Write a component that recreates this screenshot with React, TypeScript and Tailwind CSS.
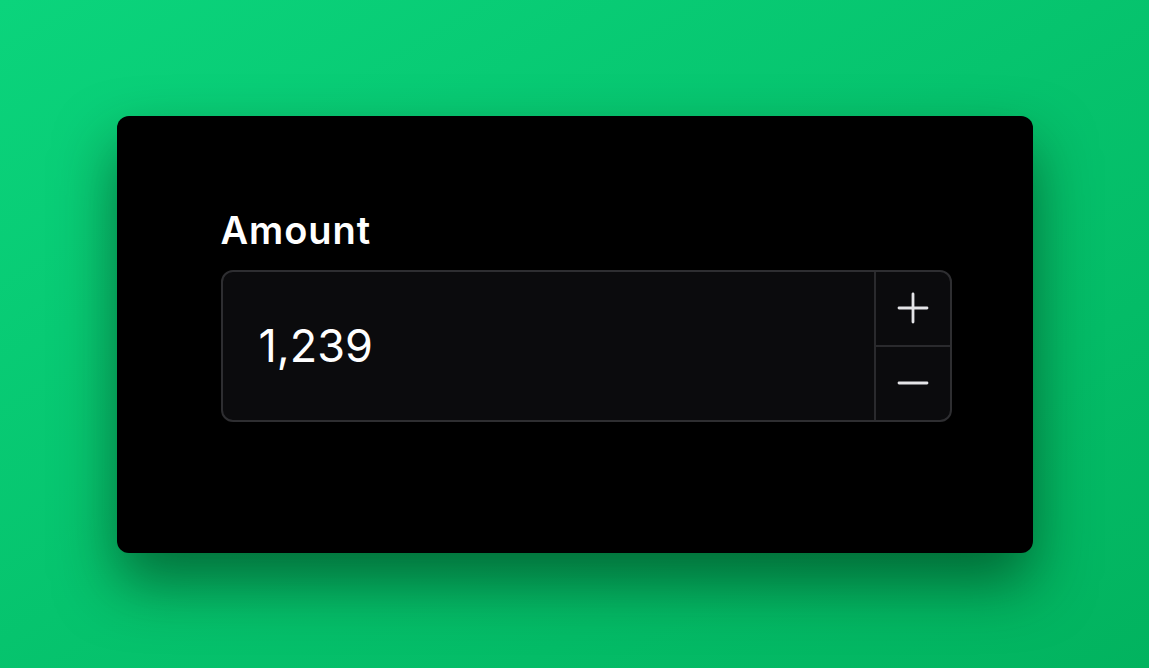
import { Plus, Minus } from "lucide-react";

export default function App() {
  return (
    <div className="flex h-[668px] w-full items-center justify-center bg-gradient-to-br from-[#0bd47c] to-[#02b35f] font-['Inter',sans-serif]">
      <div className="h-[437px] w-[916px] rounded-[12px] bg-black px-[104px] pt-[95px] shadow-[0_30px_60px_rgba(0,40,15,0.55)]">
        <label className="block text-[38px] font-semibold leading-[38px] tracking-[0.025em] text-white">
          Amount
        </label>
        <div className="mt-[21px] flex h-[152px] w-[731px] overflow-hidden rounded-[12px] border-2 border-[#2e2e31] bg-[#0b0b0d]">
          <div className="flex flex-1 items-center pl-[36px] text-[45px] text-white">
            1,239
          </div>
          <div className="flex w-[76px] flex-col border-l-2 border-[#2a2a2d]">
            <button className="flex flex-1 items-center justify-center text-[#e4e4e7]">
              <Plus size={48} strokeWidth={1.4} />
            </button>
            <button className="flex flex-1 items-center justify-center border-t-2 border-[#2a2a2d] text-[#e4e4e7]">
              <Minus size={48} strokeWidth={1.4} />
            </button>
          </div>
        </div>
      </div>
    </div>
  );
}
